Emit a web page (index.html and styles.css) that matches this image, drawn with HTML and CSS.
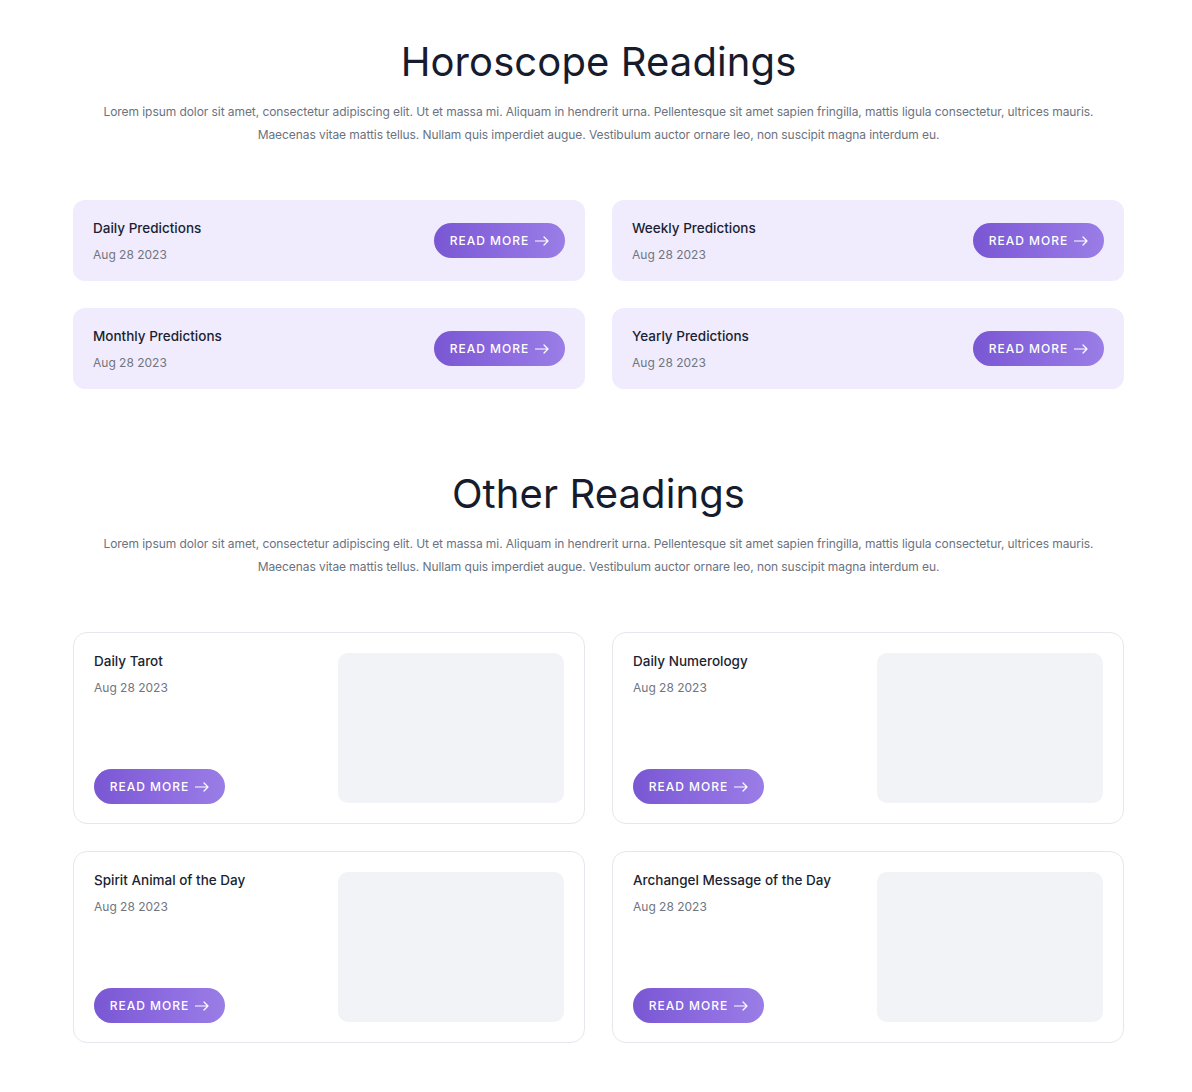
FILE: index.html
```html
<!DOCTYPE html>
<html lang="en">
<head>
<meta charset="utf-8">
<title>Readings</title>
<link rel="stylesheet" href="styles.css">
</head>
<body>
<main class="page">
  <section class="section">
    <h1 class="heading">Horoscope Readings</h1>
    <p class="lead">Lorem ipsum dolor sit amet, consectetur adipiscing elit. Ut et massa mi. Aliquam in hendrerit urna. Pellentesque sit amet sapien fringilla, mattis ligula consectetur, ultrices mauris. Maecenas vitae mattis tellus. Nullam quis imperdiet augue. Vestibulum auctor ornare leo, non suscipit magna interdum eu.</p>
    <div class="grid">
      <div class="pcard">
        <div class="info"><div class="title">Daily Predictions</div><div class="date">Aug 28 2023</div></div>
        <a class="btn" href="#">READ MORE <svg class="arrow" viewBox="0 0 14 10" width="14" height="10"><path d="M0.5 5H13M9 1l4 4-4 4" fill="none" stroke="currentColor" stroke-width="1.2" stroke-linecap="round" stroke-linejoin="round"/></svg></a>
      </div>
      <div class="pcard">
        <div class="info"><div class="title">Weekly Predictions</div><div class="date">Aug 28 2023</div></div>
        <a class="btn" href="#">READ MORE <svg class="arrow" viewBox="0 0 14 10" width="14" height="10"><path d="M0.5 5H13M9 1l4 4-4 4" fill="none" stroke="currentColor" stroke-width="1.2" stroke-linecap="round" stroke-linejoin="round"/></svg></a>
      </div>
      <div class="pcard">
        <div class="info"><div class="title">Monthly Predictions</div><div class="date">Aug 28 2023</div></div>
        <a class="btn" href="#">READ MORE <svg class="arrow" viewBox="0 0 14 10" width="14" height="10"><path d="M0.5 5H13M9 1l4 4-4 4" fill="none" stroke="currentColor" stroke-width="1.2" stroke-linecap="round" stroke-linejoin="round"/></svg></a>
      </div>
      <div class="pcard">
        <div class="info"><div class="title">Yearly Predictions</div><div class="date">Aug 28 2023</div></div>
        <a class="btn" href="#">READ MORE <svg class="arrow" viewBox="0 0 14 10" width="14" height="10"><path d="M0.5 5H13M9 1l4 4-4 4" fill="none" stroke="currentColor" stroke-width="1.2" stroke-linecap="round" stroke-linejoin="round"/></svg></a>
      </div>
    </div>
  </section>

  <section class="section second">
    <h2 class="heading">Other Readings</h2>
    <p class="lead">Lorem ipsum dolor sit amet, consectetur adipiscing elit. Ut et massa mi. Aliquam in hendrerit urna. Pellentesque sit amet sapien fringilla, mattis ligula consectetur, ultrices mauris. Maecenas vitae mattis tellus. Nullam quis imperdiet augue. Vestibulum auctor ornare leo, non suscipit magna interdum eu.</p>
    <div class="grid">
      <div class="ocard">
        <div class="ocol">
          <div class="info"><div class="title">Daily Tarot</div><div class="date">Aug 28 2023</div></div>
          <a class="btn" href="#">READ MORE <svg class="arrow" viewBox="0 0 14 10" width="14" height="10"><path d="M0.5 5H13M9 1l4 4-4 4" fill="none" stroke="currentColor" stroke-width="1.2" stroke-linecap="round" stroke-linejoin="round"/></svg></a>
        </div>
        <div class="thumb"></div>
      </div>
      <div class="ocard">
        <div class="ocol">
          <div class="info"><div class="title">Daily Numerology</div><div class="date">Aug 28 2023</div></div>
          <a class="btn" href="#">READ MORE <svg class="arrow" viewBox="0 0 14 10" width="14" height="10"><path d="M0.5 5H13M9 1l4 4-4 4" fill="none" stroke="currentColor" stroke-width="1.2" stroke-linecap="round" stroke-linejoin="round"/></svg></a>
        </div>
        <div class="thumb"></div>
      </div>
      <div class="ocard">
        <div class="ocol">
          <div class="info"><div class="title">Spirit Animal of the Day</div><div class="date">Aug 28 2023</div></div>
          <a class="btn" href="#">READ MORE <svg class="arrow" viewBox="0 0 14 10" width="14" height="10"><path d="M0.5 5H13M9 1l4 4-4 4" fill="none" stroke="currentColor" stroke-width="1.2" stroke-linecap="round" stroke-linejoin="round"/></svg></a>
        </div>
        <div class="thumb"></div>
      </div>
      <div class="ocard">
        <div class="ocol">
          <div class="info"><div class="title">Archangel Message of the Day</div><div class="date">Aug 28 2023</div></div>
          <a class="btn" href="#">READ MORE <svg class="arrow" viewBox="0 0 14 10" width="14" height="10"><path d="M0.5 5H13M9 1l4 4-4 4" fill="none" stroke="currentColor" stroke-width="1.2" stroke-linecap="round" stroke-linejoin="round"/></svg></a>
        </div>
        <div class="thumb"></div>
      </div>
    </div>
  </section>
</main>
</body>
</html>
```

FILE: styles.css
```css
* { box-sizing: border-box; }

html, body {
  margin: 0;
  padding: 0;
  background: #ffffff;
}

body {
  font-family: Inter, "Noto Sans", "Liberation Sans", sans-serif;
  color: #111827;
  padding-left: 5px;
}

.page {
  width: 1051px;
  margin: 0 auto;
  padding: 38px 0 50px;
}

.section {
  display: flex;
  flex-direction: column;
  align-items: center;
}

.second {
  margin-top: 81px;
}

.heading {
  margin: 0;
  font-size: 40px;
  line-height: 48px;
  font-weight: 400;
  color: #161b2e;
  letter-spacing: 0.1px;
}

.lead {
  margin: 14px 0 0;
  font-size: 12px;
  line-height: 23px;
  color: #6b7280;
  text-align: center;
  letter-spacing: -0.07px;
  max-width: 1000px;
}

.grid {
  margin-top: 54px;
  width: 100%;
  display: grid;
  grid-template-columns: 1fr 1fr;
  column-gap: 27px;
  row-gap: 27px;
}

.pcard {
  height: 81px;
  background: #f0ecfd;
  border-radius: 12px;
  padding: 0 20px;
  display: flex;
  align-items: center;
  justify-content: space-between;
}

.pcard .info {
  padding-top: 2px;
}

.info {
  display: flex;
  flex-direction: column;
  gap: 7px;
}

.title {
  font-size: 13.5px;
  line-height: 19px;
  font-weight: 500;
  color: #1a1f33;
}

.date {
  font-size: 12px;
  line-height: 19px;
  color: #70757f;
}

.btn {
  display: inline-flex;
  align-items: center;
  gap: 6px;
  height: 35px;
  width: 131px;
  justify-content: center;
  border-radius: 18px;
  background: linear-gradient(90deg, #7a57d3 0%, #8d6ce0 55%, #9a7de6 100%);
  color: #ffffff;
  text-decoration: none;
  font-size: 12px;
  font-weight: 500;
  letter-spacing: 1px;
}

.arrow {
  display: block;
}

.ocard {
  height: 192px;
  border: 1px solid #e6e7ec;
  border-radius: 14px;
  padding: 20px;
  display: flex;
  justify-content: space-between;
}

.ocol {
  display: flex;
  flex-direction: column;
  justify-content: space-between;
  align-items: flex-start;
  margin: -1px 0;
}

.thumb {
  width: 226px;
  height: 150px;
  background: #f2f3f7;
  border-radius: 10px;
}
```
